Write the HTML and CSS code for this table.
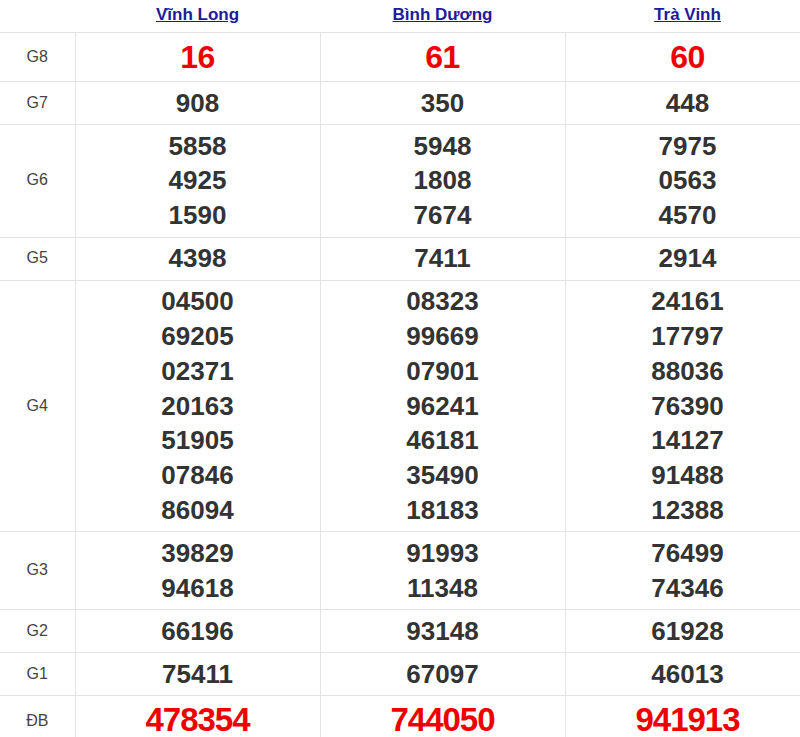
FILE: index.html
```html
<!DOCTYPE html>
<html lang="vi">
<head>
<meta charset="utf-8">
<title>Kết quả xổ số</title>
<link rel="stylesheet" href="styles.css">
</head>
<body>
<table class="kq">
  <colgroup>
    <col class="c-label"><col class="c-prov"><col class="c-prov"><col class="c-prov">
  </colgroup>
  <thead>
    <tr class="head">
      <th></th>
      <th><a href="#">Vĩnh Long</a></th>
      <th><a href="#">Bình Dương</a></th>
      <th><a href="#">Trà Vinh</a></th>
    </tr>
  </thead>
  <tbody>
    <tr class="g8">
      <td class="lbl">G8</td>
      <td><div>16</div></td><td><div>61</div></td><td><div>60</div></td>
    </tr>
    <tr>
      <td class="lbl">G7</td>
      <td><div>908</div></td><td><div>350</div></td><td><div>448</div></td>
    </tr>
    <tr>
      <td class="lbl">G6</td>
      <td><div>5858</div><div>4925</div><div>1590</div></td>
      <td><div>5948</div><div>1808</div><div>7674</div></td>
      <td><div>7975</div><div>0563</div><div>4570</div></td>
    </tr>
    <tr>
      <td class="lbl">G5</td>
      <td><div>4398</div></td><td><div>7411</div></td><td><div>2914</div></td>
    </tr>
    <tr>
      <td class="lbl">G4</td>
      <td><div>04500</div><div>69205</div><div>02371</div><div>20163</div><div>51905</div><div>07846</div><div>86094</div></td>
      <td><div>08323</div><div>99669</div><div>07901</div><div>96241</div><div>46181</div><div>35490</div><div>18183</div></td>
      <td><div>24161</div><div>17797</div><div>88036</div><div>76390</div><div>14127</div><div>91488</div><div>12388</div></td>
    </tr>
    <tr>
      <td class="lbl">G3</td>
      <td><div>39829</div><div>94618</div></td>
      <td><div>91993</div><div>11348</div></td>
      <td><div>76499</div><div>74346</div></td>
    </tr>
    <tr>
      <td class="lbl">G2</td>
      <td><div>66196</div></td><td><div>93148</div></td><td><div>61928</div></td>
    </tr>
    <tr>
      <td class="lbl">G1</td>
      <td><div>75411</div></td><td><div>67097</div></td><td><div>46013</div></td>
    </tr>
    <tr class="db">
      <td class="lbl">ĐB</td>
      <td><div>478354</div></td><td><div>744050</div></td><td><div>941913</div></td>
    </tr>
  </tbody>
</table>
</body>
</html>
```
FILE: styles.css
```css
html, body {
  margin: 0;
  padding: 0;
  background: #fff;
  overflow: hidden;
}
body {
  font-family: "Liberation Sans", Arial, sans-serif;
  color: #333;
}
.kq {
  border-collapse: collapse;
  table-layout: fixed;
  width: 810px;
}
.c-label { width: 75px; }
.c-prov { width: 245px; }
.kq th {
  height: 30px;
  padding: 0 0 2px;
  border-bottom: 1px solid #e3e3e3;
  text-align: center;
  vertical-align: middle;
  font-size: 17px;
  line-height: 20px;
  font-weight: bold;
}
.kq th a {
  color: #1e1a99;
  text-decoration: underline;
}
.kq td {
  border: 1px solid #e3e3e3;
  padding: 3.6px 0;
  text-align: center;
  vertical-align: middle;
  font-size: 26px;
  font-weight: bold;
  line-height: 34.8px;
  color: #333;
}
.kq tr td:first-child { border-left: none; }
.kq td.lbl {
  font-size: 16px;
  font-weight: normal;
  color: #444;
}
.kq tr.g8 td:not(.lbl) {
  font-size: 32px;
  line-height: 40.8px;
  letter-spacing: -0.5px;
  color: #e00;
}
.kq tr.db td {
  vertical-align: top;
  padding-bottom: 0;
}
.kq tr.db td.lbl {
  padding-top: 8px;
}
.kq tr.db td:not(.lbl) {
  padding-top: 7px;
  font-size: 33px;
  line-height: 33px;
  letter-spacing: -1px;
  color: #e00;
}
```
